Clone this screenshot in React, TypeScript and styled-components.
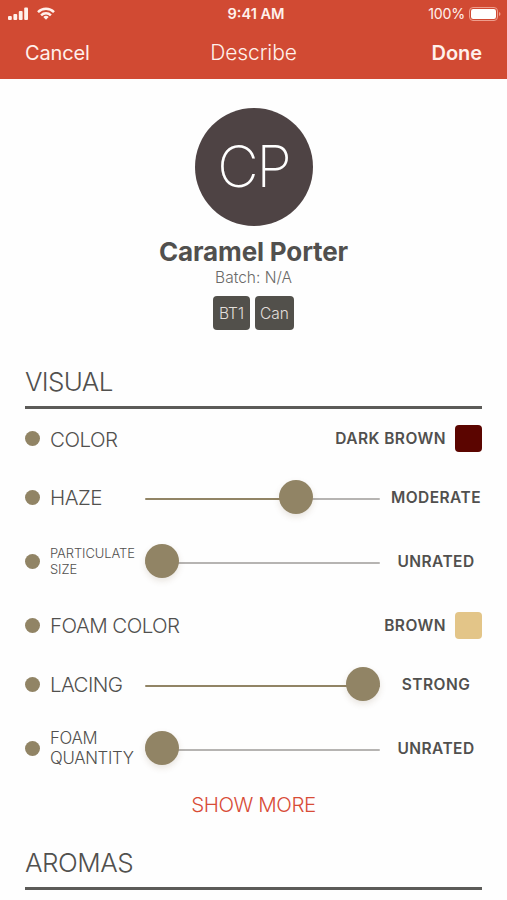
import React from "react";
import styled, { createGlobalStyle } from "styled-components";

const GlobalStyle = createGlobalStyle`
  * { box-sizing: border-box; }
  body {
    margin: 0;
    background: #fefefe;
    font-family: Inter, "Liberation Sans", sans-serif;
    color: #51504e;
  }
`;

const Screen = styled.div`
  width: 507px;
  height: 900px;
  overflow: hidden;
  background: #fefefe;
`;

const Header = styled.header`
  height: 79px;
  background: #d14a33;
  color: #fff1ec;
`;

const StatusBar = styled.div`
  height: 27px;
  padding: 0 6px 0 8px;
  display: grid;
  grid-template-columns: 1fr auto 1fr;
  align-items: center;
`;

const Signals = styled.div`
  display: flex;
  align-items: center;
  gap: 9px;
  svg { display: block; }
`;

const Clock = styled.span`
  font-size: 14.6px;
  font-weight: 600;
  letter-spacing: 0;
  padding: 1px 0 0 3px;
`;

const Battery = styled.div`
  display: flex;
  align-items: center;
  justify-content: flex-end;
  gap: 4px;
  font-size: 14.2px;
  letter-spacing: -0.2px;
  svg { display: block; }
`;

const NavBar = styled.nav`
  height: 52px;
  padding: 0 25px;
  display: grid;
  grid-template-columns: 1fr auto 1fr;
  align-items: center;
  line-height: 50px;
`;

const NavButton = styled.button<{ $strong?: boolean }>`
  border: 0;
  padding: 0;
  background: none;
  color: inherit;
  font: inherit;
  font-size: 20px;
  font-weight: ${(p) => (p.$strong ? 600 : 400)};
  letter-spacing: ${(p) => (p.$strong ? "-0.05px" : "-0.15px")};
  justify-self: ${(p) => (p.$strong ? "end" : "start")};
`;

const NavTitle = styled.h1`
  margin: 0;
  font-size: 21px;
  font-weight: 300;
  letter-spacing: -0.1px;
`;

const Profile = styled.section`
  display: flex;
  flex-direction: column;
  align-items: center;
  padding-top: 29px;
  height: 277px;
`;

const Avatar = styled.div`
  width: 118px;
  height: 118px;
  border-radius: 50%;
  background: #4e4344;
  color: #fff;
  font-size: 57px;
  font-weight: 250;
  letter-spacing: -2px;
  line-height: 118px;
  text-align: center;
`;

const Name = styled.h2`
  margin: 10px 0 0;
  font-size: 26px;
  font-weight: 700;
  line-height: 32px;
  letter-spacing: -0.15px;
`;

const Batch = styled.div`
  color: #6b6a68;
  font-size: 15.5px;
  font-weight: 300;
  line-height: 19px;
`;

const Tags = styled.div`
  display: flex;
  gap: 5px;
  margin-top: 9px;
`;

const Tag = styled.span<{ $width: number }>`
  width: ${(p) => p.$width}px;
  height: 34px;
  border-radius: 4px;
  background: #52504b;
  color: #e2dfda;
  font-size: 15.5px;
  line-height: 35px;
  font-weight: 300;
  text-align: center;
`;

const SectionTitle = styled.h3<{ $spacing: number }>`
  height: 53px;
  margin: 0 25px;
  border-bottom: 3px solid #5c5b58;
  font-size: 26px;
  font-weight: 300;
  letter-spacing: ${(p) => p.$spacing}px;
  line-height: 51px;
`;

const Row = styled.div<{ $height: number }>`
  display: flex;
  align-items: center;
  height: ${(p) => p.$height}px;
  padding: 0 25px;
`;

const Dot = styled.span`
  flex: none;
  width: 15px;
  height: 15px;
  margin-right: 10px;
  border-radius: 50%;
  background: #918465;
`;

const Label = styled.span<{ $size: number; $spacing: number; $line?: number; $fixed: boolean }>`
  width: ${(p) => (p.$fixed ? "95px" : "auto")};
  flex: ${(p) => (p.$fixed ? "none" : "1")};
  padding-top: ${(p) => (p.$line ? 0 : 2)}px;
  font-size: ${(p) => p.$size}px;
  line-height: ${(p) => p.$line ?? 24}px;
  letter-spacing: ${(p) => p.$spacing}px;
  font-weight: 300;
  white-space: pre-line;
`;

const Slider = styled.div`
  position: relative;
  flex: none;
  display: flex;
  align-items: center;
  width: 235px;
  height: 34px;
`;

const Track = styled.div<{ $percent: number }>`
  width: 100%;
  height: 2px;
  margin-top: 3px;
  border-radius: 1px;
  background: linear-gradient(to right, #918465 ${(p) => p.$percent}%, #b6b4b2 ${(p) => p.$percent}%);
`;

const Thumb = styled.div<{ $percent: number }>`
  position: absolute;
  top: 0;
  left: calc((100% - 34px) * ${(p) => p.$percent / 100});
  width: 34px;
  height: 34px;
  border-radius: 50%;
  background: #918465;
  box-shadow: 0 3px 6px rgba(110, 80, 50, 0.15);
`;

const ValueText = styled.span`
  font-size: 15.5px;
  font-weight: 600;
  letter-spacing: 0.45px;
  white-space: nowrap;
`;

const Rating = styled(ValueText)`
  flex: 1;
  padding-left: 10px;
  text-align: center;
`;

const Swatch = styled.span<{ $color: string }>`
  width: 27px;
  height: 27px;
  margin-left: 9px;
  border-radius: 4px;
  background: ${(p) => p.$color};
`;

const ShowMore = styled.button`
  display: block;
  width: 100%;
  height: 55px;
  border: 0;
  padding: 0 0 11px;
  background: none;
  color: #d84c37;
  font: 300 20.5px Inter, sans-serif;
  letter-spacing: -0.45px;
`;

type Attribute = {
  label: string;
  value: string;
  height: number;
  size: number;
  spacing: number;
  line?: number;
  percent?: number;
  color?: string;
};

const attributes: Attribute[] = [
  { label: "COLOR", value: "DARK BROWN", height: 59, size: 20.5, spacing: -0.5, color: "#5b0500" },
  { label: "HAZE", value: "MODERATE", height: 58, size: 20.5, spacing: -0.5, percent: 66.5 },
  { label: "PARTICULATE\nSIZE", value: "UNRATED", height: 70, size: 13, spacing: -0.1, line: 16, percent: 0 },
  { label: "FOAM COLOR", value: "BROWN", height: 58, size: 20.5, spacing: -0.55, color: "#e3c588" },
  { label: "LACING", value: "STRONG", height: 60, size: 20.5, spacing: -0.6, percent: 100 },
  { label: "FOAM\nQUANTITY", value: "UNRATED", height: 68, size: 16.8, spacing: -0.3, line: 20, percent: 0 },
];

const SignalIcon = () => (
  <svg width="20" height="13" viewBox="0 0 20 13" fill="#fff1ec">
    <rect x="0" y="9" width="3.8" height="4" rx="1" />
    <rect x="5.4" y="7" width="3.8" height="6" rx="1" />
    <rect x="10.8" y="4" width="3.8" height="9" rx="1" />
    <rect x="16.2" y="0.5" width="3.8" height="12.5" rx="1" />
  </svg>
);

const WifiIcon = () => (
  <svg width="18" height="13" viewBox="0 0 18 13" fill="none" stroke="#fff1ec" strokeWidth="2.5">
    <path d="M1 5.1a11.4 11.4 0 0 1 16 0" />
    <path d="M4.1 8.3a7 7 0 0 1 9.8 0" />
    <path d="M9 12.8 6.3 10.1a3.9 3.9 0 0 1 5.4 0Z" fill="#fff1ec" stroke="none" />
  </svg>
);

const BatteryIcon = () => (
  <svg width="32" height="14" viewBox="0 0 32 14">
    <rect x="0.5" y="0.5" width="28" height="13" rx="3.5" fill="none" stroke="#ee9e8d" />
    <rect x="2" y="2" width="25" height="10" rx="2.2" fill="#fff" />
    <path d="M30 5v4q1.5-.6 1.5-2T30 5Z" fill="#ee9e8d" />
  </svg>
);

export default function App() {
  return (
    <Screen>
      <GlobalStyle />
      <Header>
        <StatusBar>
          <Signals>
            <SignalIcon />
            <WifiIcon />
          </Signals>
          <Clock>9:41 AM</Clock>
          <Battery>
            100%
            <BatteryIcon />
          </Battery>
        </StatusBar>
        <NavBar>
          <NavButton>Cancel</NavButton>
          <NavTitle>Describe</NavTitle>
          <NavButton $strong>Done</NavButton>
        </NavBar>
      </Header>
      <Profile>
        <Avatar>CP</Avatar>
        <Name>Caramel Porter</Name>
        <Batch>Batch: N/A</Batch>
        <Tags>
          <Tag $width={37}>BT1</Tag>
          <Tag $width={39}>Can</Tag>
        </Tags>
      </Profile>
      <SectionTitle $spacing={-0.65}>VISUAL</SectionTitle>
      {attributes.map((a) => (
        <Row key={a.label} $height={a.height}>
          <Dot />
          <Label $size={a.size} $spacing={a.spacing} $line={a.line} $fixed={a.percent !== undefined}>
            {a.label}
          </Label>
          {a.percent !== undefined ? (
            <>
              <Slider>
                <Track $percent={a.percent} />
                <Thumb $percent={a.percent} />
              </Slider>
              <Rating>{a.value}</Rating>
            </>
          ) : (
            <>
              <ValueText>{a.value}</ValueText>
              <Swatch $color={a.color!} />
            </>
          )}
        </Row>
      ))}
      <ShowMore>SHOW MORE</ShowMore>
      <SectionTitle $spacing={-0.5}>AROMAS</SectionTitle>
    </Screen>
  );
}
